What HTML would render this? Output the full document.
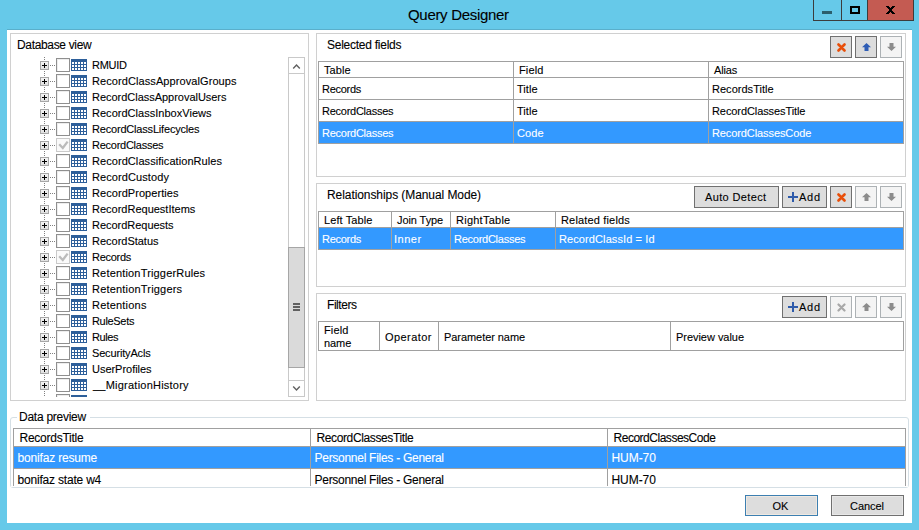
<!DOCTYPE html>
<html><head><meta charset="utf-8"><style>
html,body{margin:0;padding:0;width:919px;height:530px;overflow:hidden;background:#66C9E9;}
body div, body svg{position:absolute;}
.t{white-space:nowrap;font-family:"Liberation Sans",sans-serif;-webkit-text-stroke:0.1px currentColor;}
</style></head><body>
<div style="left:7px;top:29px;width:905px;height:1px;background:#5AAFCB"></div><div style="left:7px;top:30px;width:905px;height:493px;background:#fff"></div><div class="t" style="left:408.00px;top:6px;font-size:15px;line-height:17px;color:#000;letter-spacing:-0.311px;">Query Designer</div><div style="left:813px;top:-1px;width:29px;height:22px;border:1px solid #3C3C3C;box-sizing:border-box;background:#66C9E9"></div><div style="left:842px;top:-1px;width:26px;height:22px;border:1px solid #3C3C3C;border-left:none;box-sizing:border-box;background:#66C9E9"></div><div style="left:867px;top:-1px;width:47px;height:22px;border:1px solid #3C3C3C;box-sizing:border-box;background:#C45B52"></div><div style="left:822px;top:11px;width:10px;height:3px;background:#2B5E6C"></div><div style="left:850px;top:6px;width:10px;height:8px;border:2px solid #000;box-sizing:border-box"></div><svg style="left:886px;top:6px" width="9" height="8" viewBox="0 0 9 8" shape-rendering="crispEdges" fill="#000"><rect x="0" y="0" width="1" height="1"/><rect x="1" y="0" width="1" height="1"/><rect x="2" y="0" width="1" height="1"/><rect x="6" y="0" width="1" height="1"/><rect x="7" y="0" width="1" height="1"/><rect x="8" y="0" width="1" height="1"/><rect x="1" y="1" width="1" height="1"/><rect x="2" y="1" width="1" height="1"/><rect x="3" y="1" width="1" height="1"/><rect x="5" y="1" width="1" height="1"/><rect x="6" y="1" width="1" height="1"/><rect x="7" y="1" width="1" height="1"/><rect x="2" y="2" width="1" height="1"/><rect x="3" y="2" width="1" height="1"/><rect x="4" y="2" width="1" height="1"/><rect x="5" y="2" width="1" height="1"/><rect x="6" y="2" width="1" height="1"/><rect x="3" y="3" width="1" height="1"/><rect x="4" y="3" width="1" height="1"/><rect x="5" y="3" width="1" height="1"/><rect x="3" y="4" width="1" height="1"/><rect x="4" y="4" width="1" height="1"/><rect x="5" y="4" width="1" height="1"/><rect x="2" y="5" width="1" height="1"/><rect x="3" y="5" width="1" height="1"/><rect x="4" y="5" width="1" height="1"/><rect x="5" y="5" width="1" height="1"/><rect x="6" y="5" width="1" height="1"/><rect x="1" y="6" width="1" height="1"/><rect x="2" y="6" width="1" height="1"/><rect x="3" y="6" width="1" height="1"/><rect x="5" y="6" width="1" height="1"/><rect x="6" y="6" width="1" height="1"/><rect x="7" y="6" width="1" height="1"/><rect x="0" y="7" width="1" height="1"/><rect x="1" y="7" width="1" height="1"/><rect x="2" y="7" width="1" height="1"/><rect x="6" y="7" width="1" height="1"/><rect x="7" y="7" width="1" height="1"/><rect x="8" y="7" width="1" height="1"/></svg><div style="left:10px;top:33px;width:299px;height:368px;border:1px solid #D0D0D0;box-sizing:border-box"></div><div class="t" style="left:17.00px;top:38px;font-size:12px;line-height:14px;color:#000;letter-spacing:-0.337px;">Database view</div><div class="t" style="left:92.00px;top:59px;font-size:11px;line-height:13px;color:#000;letter-spacing:-0.277px;">RMUID</div><div class="t" style="left:92.00px;top:75px;font-size:11px;line-height:13px;color:#000;letter-spacing:0.085px;">RecordClassApprovalGroups</div><div class="t" style="left:92.00px;top:91px;font-size:11px;line-height:13px;color:#000;letter-spacing:-0.026px;">RecordClassApprovalUsers</div><div class="t" style="left:92.00px;top:107px;font-size:11px;line-height:13px;color:#000;letter-spacing:0.024px;">RecordClassInboxViews</div><div class="t" style="left:92.00px;top:123px;font-size:11px;line-height:13px;color:#000;letter-spacing:-0.188px;">RecordClassLifecycles</div><div class="t" style="left:92.00px;top:139px;font-size:11px;line-height:13px;color:#000;letter-spacing:-0.257px;">RecordClasses</div><div class="t" style="left:92.00px;top:155px;font-size:11px;line-height:13px;color:#000;letter-spacing:0.067px;">RecordClassificationRules</div><div class="t" style="left:92.00px;top:171px;font-size:11px;line-height:13px;color:#000;letter-spacing:0.091px;">RecordCustody</div><div class="t" style="left:92.00px;top:187px;font-size:11px;line-height:13px;color:#000;letter-spacing:0.060px;">RecordProperties</div><div class="t" style="left:92.00px;top:203px;font-size:11px;line-height:13px;color:#000;letter-spacing:-0.001px;">RecordRequestItems</div><div class="t" style="left:92.00px;top:219px;font-size:11px;line-height:13px;color:#000;letter-spacing:-0.025px;">RecordRequests</div><div class="t" style="left:92.00px;top:235px;font-size:11px;line-height:13px;color:#000;letter-spacing:-0.013px;">RecordStatus</div><div class="t" style="left:92.00px;top:251px;font-size:11px;line-height:13px;color:#000;letter-spacing:-0.277px;">Records</div><div class="t" style="left:92.00px;top:267px;font-size:11px;line-height:13px;color:#000;letter-spacing:0.173px;">RetentionTriggerRules</div><div class="t" style="left:92.00px;top:283px;font-size:11px;line-height:13px;color:#000;letter-spacing:0.192px;">RetentionTriggers</div><div class="t" style="left:92.00px;top:299px;font-size:11px;line-height:13px;color:#000;letter-spacing:0.201px;">Retentions</div><div class="t" style="left:92.00px;top:315px;font-size:11px;line-height:13px;color:#000;letter-spacing:-0.319px;">RuleSets</div><div class="t" style="left:92.00px;top:331px;font-size:11px;line-height:13px;color:#000;letter-spacing:-0.406px;">Rules</div><div class="t" style="left:92.00px;top:347px;font-size:11px;line-height:13px;color:#000;letter-spacing:-0.165px;">SecurityAcls</div><div class="t" style="left:92.00px;top:363px;font-size:11px;line-height:13px;color:#000;letter-spacing:-0.028px;">UserProfiles</div><div class="t" style="left:93.00px;top:379px;font-size:11px;line-height:13px;color:#000;letter-spacing:0.229px;">__MigrationHistory</div><div style="left:11px;top:34px;width:277px;height:363px;overflow:hidden"><div style="left:33px;top:23px;width:1px;height:1px;background:#808080"></div><div style="left:33px;top:25px;width:1px;height:1px;background:#808080"></div><div style="left:33px;top:27px;width:1px;height:1px;background:#808080"></div><div style="left:33px;top:29px;width:1px;height:1px;background:#808080"></div><div style="left:33px;top:31px;width:1px;height:1px;background:#808080"></div><div style="left:33px;top:33px;width:1px;height:1px;background:#808080"></div><div style="left:33px;top:35px;width:1px;height:1px;background:#808080"></div><div style="left:33px;top:37px;width:1px;height:1px;background:#808080"></div><div style="left:33px;top:39px;width:1px;height:1px;background:#808080"></div><div style="left:33px;top:41px;width:1px;height:1px;background:#808080"></div><div style="left:33px;top:43px;width:1px;height:1px;background:#808080"></div><div style="left:33px;top:45px;width:1px;height:1px;background:#808080"></div><div style="left:33px;top:47px;width:1px;height:1px;background:#808080"></div><div style="left:33px;top:49px;width:1px;height:1px;background:#808080"></div><div style="left:33px;top:51px;width:1px;height:1px;background:#808080"></div><div style="left:33px;top:53px;width:1px;height:1px;background:#808080"></div><div style="left:33px;top:55px;width:1px;height:1px;background:#808080"></div><div style="left:33px;top:57px;width:1px;height:1px;background:#808080"></div><div style="left:33px;top:59px;width:1px;height:1px;background:#808080"></div><div style="left:33px;top:61px;width:1px;height:1px;background:#808080"></div><div style="left:33px;top:63px;width:1px;height:1px;background:#808080"></div><div style="left:33px;top:65px;width:1px;height:1px;background:#808080"></div><div style="left:33px;top:67px;width:1px;height:1px;background:#808080"></div><div style="left:33px;top:69px;width:1px;height:1px;background:#808080"></div><div style="left:33px;top:71px;width:1px;height:1px;background:#808080"></div><div style="left:33px;top:73px;width:1px;height:1px;background:#808080"></div><div style="left:33px;top:75px;width:1px;height:1px;background:#808080"></div><div style="left:33px;top:77px;width:1px;height:1px;background:#808080"></div><div style="left:33px;top:79px;width:1px;height:1px;background:#808080"></div><div style="left:33px;top:81px;width:1px;height:1px;background:#808080"></div><div style="left:33px;top:83px;width:1px;height:1px;background:#808080"></div><div style="left:33px;top:85px;width:1px;height:1px;background:#808080"></div><div style="left:33px;top:87px;width:1px;height:1px;background:#808080"></div><div style="left:33px;top:89px;width:1px;height:1px;background:#808080"></div><div style="left:33px;top:91px;width:1px;height:1px;background:#808080"></div><div style="left:33px;top:93px;width:1px;height:1px;background:#808080"></div><div style="left:33px;top:95px;width:1px;height:1px;background:#808080"></div><div style="left:33px;top:97px;width:1px;height:1px;background:#808080"></div><div style="left:33px;top:99px;width:1px;height:1px;background:#808080"></div><div style="left:33px;top:101px;width:1px;height:1px;background:#808080"></div><div style="left:33px;top:103px;width:1px;height:1px;background:#808080"></div><div style="left:33px;top:105px;width:1px;height:1px;background:#808080"></div><div style="left:33px;top:107px;width:1px;height:1px;background:#808080"></div><div style="left:33px;top:109px;width:1px;height:1px;background:#808080"></div><div style="left:33px;top:111px;width:1px;height:1px;background:#808080"></div><div style="left:33px;top:113px;width:1px;height:1px;background:#808080"></div><div style="left:33px;top:115px;width:1px;height:1px;background:#808080"></div><div style="left:33px;top:117px;width:1px;height:1px;background:#808080"></div><div style="left:33px;top:119px;width:1px;height:1px;background:#808080"></div><div style="left:33px;top:121px;width:1px;height:1px;background:#808080"></div><div style="left:33px;top:123px;width:1px;height:1px;background:#808080"></div><div style="left:33px;top:125px;width:1px;height:1px;background:#808080"></div><div style="left:33px;top:127px;width:1px;height:1px;background:#808080"></div><div style="left:33px;top:129px;width:1px;height:1px;background:#808080"></div><div style="left:33px;top:131px;width:1px;height:1px;background:#808080"></div><div style="left:33px;top:133px;width:1px;height:1px;background:#808080"></div><div style="left:33px;top:135px;width:1px;height:1px;background:#808080"></div><div style="left:33px;top:137px;width:1px;height:1px;background:#808080"></div><div style="left:33px;top:139px;width:1px;height:1px;background:#808080"></div><div style="left:33px;top:141px;width:1px;height:1px;background:#808080"></div><div style="left:33px;top:143px;width:1px;height:1px;background:#808080"></div><div style="left:33px;top:145px;width:1px;height:1px;background:#808080"></div><div style="left:33px;top:147px;width:1px;height:1px;background:#808080"></div><div style="left:33px;top:149px;width:1px;height:1px;background:#808080"></div><div style="left:33px;top:151px;width:1px;height:1px;background:#808080"></div><div style="left:33px;top:153px;width:1px;height:1px;background:#808080"></div><div style="left:33px;top:155px;width:1px;height:1px;background:#808080"></div><div style="left:33px;top:157px;width:1px;height:1px;background:#808080"></div><div style="left:33px;top:159px;width:1px;height:1px;background:#808080"></div><div style="left:33px;top:161px;width:1px;height:1px;background:#808080"></div><div style="left:33px;top:163px;width:1px;height:1px;background:#808080"></div><div style="left:33px;top:165px;width:1px;height:1px;background:#808080"></div><div style="left:33px;top:167px;width:1px;height:1px;background:#808080"></div><div style="left:33px;top:169px;width:1px;height:1px;background:#808080"></div><div style="left:33px;top:171px;width:1px;height:1px;background:#808080"></div><div style="left:33px;top:173px;width:1px;height:1px;background:#808080"></div><div style="left:33px;top:175px;width:1px;height:1px;background:#808080"></div><div style="left:33px;top:177px;width:1px;height:1px;background:#808080"></div><div style="left:33px;top:179px;width:1px;height:1px;background:#808080"></div><div style="left:33px;top:181px;width:1px;height:1px;background:#808080"></div><div style="left:33px;top:183px;width:1px;height:1px;background:#808080"></div><div style="left:33px;top:185px;width:1px;height:1px;background:#808080"></div><div style="left:33px;top:187px;width:1px;height:1px;background:#808080"></div><div style="left:33px;top:189px;width:1px;height:1px;background:#808080"></div><div style="left:33px;top:191px;width:1px;height:1px;background:#808080"></div><div style="left:33px;top:193px;width:1px;height:1px;background:#808080"></div><div style="left:33px;top:195px;width:1px;height:1px;background:#808080"></div><div style="left:33px;top:197px;width:1px;height:1px;background:#808080"></div><div style="left:33px;top:199px;width:1px;height:1px;background:#808080"></div><div style="left:33px;top:201px;width:1px;height:1px;background:#808080"></div><div style="left:33px;top:203px;width:1px;height:1px;background:#808080"></div><div style="left:33px;top:205px;width:1px;height:1px;background:#808080"></div><div style="left:33px;top:207px;width:1px;height:1px;background:#808080"></div><div style="left:33px;top:209px;width:1px;height:1px;background:#808080"></div><div style="left:33px;top:211px;width:1px;height:1px;background:#808080"></div><div style="left:33px;top:213px;width:1px;height:1px;background:#808080"></div><div style="left:33px;top:215px;width:1px;height:1px;background:#808080"></div><div style="left:33px;top:217px;width:1px;height:1px;background:#808080"></div><div style="left:33px;top:219px;width:1px;height:1px;background:#808080"></div><div style="left:33px;top:221px;width:1px;height:1px;background:#808080"></div><div style="left:33px;top:223px;width:1px;height:1px;background:#808080"></div><div style="left:33px;top:225px;width:1px;height:1px;background:#808080"></div><div style="left:33px;top:227px;width:1px;height:1px;background:#808080"></div><div style="left:33px;top:229px;width:1px;height:1px;background:#808080"></div><div style="left:33px;top:231px;width:1px;height:1px;background:#808080"></div><div style="left:33px;top:233px;width:1px;height:1px;background:#808080"></div><div style="left:33px;top:235px;width:1px;height:1px;background:#808080"></div><div style="left:33px;top:237px;width:1px;height:1px;background:#808080"></div><div style="left:33px;top:239px;width:1px;height:1px;background:#808080"></div><div style="left:33px;top:241px;width:1px;height:1px;background:#808080"></div><div style="left:33px;top:243px;width:1px;height:1px;background:#808080"></div><div style="left:33px;top:245px;width:1px;height:1px;background:#808080"></div><div style="left:33px;top:247px;width:1px;height:1px;background:#808080"></div><div style="left:33px;top:249px;width:1px;height:1px;background:#808080"></div><div style="left:33px;top:251px;width:1px;height:1px;background:#808080"></div><div style="left:33px;top:253px;width:1px;height:1px;background:#808080"></div><div style="left:33px;top:255px;width:1px;height:1px;background:#808080"></div><div style="left:33px;top:257px;width:1px;height:1px;background:#808080"></div><div style="left:33px;top:259px;width:1px;height:1px;background:#808080"></div><div style="left:33px;top:261px;width:1px;height:1px;background:#808080"></div><div style="left:33px;top:263px;width:1px;height:1px;background:#808080"></div><div style="left:33px;top:265px;width:1px;height:1px;background:#808080"></div><div style="left:33px;top:267px;width:1px;height:1px;background:#808080"></div><div style="left:33px;top:269px;width:1px;height:1px;background:#808080"></div><div style="left:33px;top:271px;width:1px;height:1px;background:#808080"></div><div style="left:33px;top:273px;width:1px;height:1px;background:#808080"></div><div style="left:33px;top:275px;width:1px;height:1px;background:#808080"></div><div style="left:33px;top:277px;width:1px;height:1px;background:#808080"></div><div style="left:33px;top:279px;width:1px;height:1px;background:#808080"></div><div style="left:33px;top:281px;width:1px;height:1px;background:#808080"></div><div style="left:33px;top:283px;width:1px;height:1px;background:#808080"></div><div style="left:33px;top:285px;width:1px;height:1px;background:#808080"></div><div style="left:33px;top:287px;width:1px;height:1px;background:#808080"></div><div style="left:33px;top:289px;width:1px;height:1px;background:#808080"></div><div style="left:33px;top:291px;width:1px;height:1px;background:#808080"></div><div style="left:33px;top:293px;width:1px;height:1px;background:#808080"></div><div style="left:33px;top:295px;width:1px;height:1px;background:#808080"></div><div style="left:33px;top:297px;width:1px;height:1px;background:#808080"></div><div style="left:33px;top:299px;width:1px;height:1px;background:#808080"></div><div style="left:33px;top:301px;width:1px;height:1px;background:#808080"></div><div style="left:33px;top:303px;width:1px;height:1px;background:#808080"></div><div style="left:33px;top:305px;width:1px;height:1px;background:#808080"></div><div style="left:33px;top:307px;width:1px;height:1px;background:#808080"></div><div style="left:33px;top:309px;width:1px;height:1px;background:#808080"></div><div style="left:33px;top:311px;width:1px;height:1px;background:#808080"></div><div style="left:33px;top:313px;width:1px;height:1px;background:#808080"></div><div style="left:33px;top:315px;width:1px;height:1px;background:#808080"></div><div style="left:33px;top:317px;width:1px;height:1px;background:#808080"></div><div style="left:33px;top:319px;width:1px;height:1px;background:#808080"></div><div style="left:33px;top:321px;width:1px;height:1px;background:#808080"></div><div style="left:33px;top:323px;width:1px;height:1px;background:#808080"></div><div style="left:33px;top:325px;width:1px;height:1px;background:#808080"></div><div style="left:33px;top:327px;width:1px;height:1px;background:#808080"></div><div style="left:33px;top:329px;width:1px;height:1px;background:#808080"></div><div style="left:33px;top:331px;width:1px;height:1px;background:#808080"></div><div style="left:33px;top:333px;width:1px;height:1px;background:#808080"></div><div style="left:33px;top:335px;width:1px;height:1px;background:#808080"></div><div style="left:33px;top:337px;width:1px;height:1px;background:#808080"></div><div style="left:33px;top:339px;width:1px;height:1px;background:#808080"></div><div style="left:33px;top:341px;width:1px;height:1px;background:#808080"></div><div style="left:33px;top:343px;width:1px;height:1px;background:#808080"></div><div style="left:33px;top:345px;width:1px;height:1px;background:#808080"></div><div style="left:33px;top:347px;width:1px;height:1px;background:#808080"></div><div style="left:33px;top:349px;width:1px;height:1px;background:#808080"></div><div style="left:33px;top:351px;width:1px;height:1px;background:#808080"></div><div style="left:33px;top:353px;width:1px;height:1px;background:#808080"></div><div style="left:33px;top:355px;width:1px;height:1px;background:#808080"></div><div style="left:33px;top:357px;width:1px;height:1px;background:#808080"></div><div style="left:33px;top:359px;width:1px;height:1px;background:#808080"></div><div style="left:33px;top:361px;width:1px;height:1px;background:#808080"></div><div style="left:33px;top:363px;width:1px;height:1px;background:#808080"></div><div style="left:39px;top:31px;width:1px;height:1px;background:#808080"></div><div style="left:41px;top:31px;width:1px;height:1px;background:#808080"></div><div style="left:43px;top:31px;width:1px;height:1px;background:#808080"></div><div style="left:29px;top:27px;width:9px;height:9px;border:1px solid #A7A7A7;box-sizing:border-box;background:linear-gradient(#F4F4F4,#E0E0E0)"></div><div style="left:31px;top:31px;width:5px;height:1px;background:#000"></div><div style="left:33px;top:29px;width:1px;height:5px;background:#000"></div><div style="left:45px;top:24px;width:14px;height:14px;border:1px solid #8F8F8F;box-sizing:border-box;background:#fff;box-shadow:inset 1px 1px 0 #EDEDED"></div><svg style="left:60px;top:25px" width="16" height="12" viewBox="0 0 16 12" shape-rendering="crispEdges"><rect width="16" height="12" fill="#2D5F9A"/><g fill="#fff"><rect x="1" y="3" width="2" height="2"/><rect x="1" y="6" width="2" height="2"/><rect x="1" y="9" width="2" height="2"/><rect x="4" y="3" width="2" height="2"/><rect x="4" y="6" width="2" height="2"/><rect x="4" y="9" width="2" height="2"/><rect x="7" y="3" width="2" height="2"/><rect x="7" y="6" width="2" height="2"/><rect x="7" y="9" width="2" height="2"/><rect x="10" y="3" width="2" height="2"/><rect x="10" y="6" width="2" height="2"/><rect x="10" y="9" width="2" height="2"/><rect x="13" y="3" width="2" height="2"/><rect x="13" y="6" width="2" height="2"/><rect x="13" y="9" width="2" height="2"/></g></svg><div style="left:39px;top:47px;width:1px;height:1px;background:#808080"></div><div style="left:41px;top:47px;width:1px;height:1px;background:#808080"></div><div style="left:43px;top:47px;width:1px;height:1px;background:#808080"></div><div style="left:29px;top:43px;width:9px;height:9px;border:1px solid #A7A7A7;box-sizing:border-box;background:linear-gradient(#F4F4F4,#E0E0E0)"></div><div style="left:31px;top:47px;width:5px;height:1px;background:#000"></div><div style="left:33px;top:45px;width:1px;height:5px;background:#000"></div><div style="left:45px;top:40px;width:14px;height:14px;border:1px solid #8F8F8F;box-sizing:border-box;background:#fff;box-shadow:inset 1px 1px 0 #EDEDED"></div><svg style="left:60px;top:41px" width="16" height="12" viewBox="0 0 16 12" shape-rendering="crispEdges"><rect width="16" height="12" fill="#2D5F9A"/><g fill="#fff"><rect x="1" y="3" width="2" height="2"/><rect x="1" y="6" width="2" height="2"/><rect x="1" y="9" width="2" height="2"/><rect x="4" y="3" width="2" height="2"/><rect x="4" y="6" width="2" height="2"/><rect x="4" y="9" width="2" height="2"/><rect x="7" y="3" width="2" height="2"/><rect x="7" y="6" width="2" height="2"/><rect x="7" y="9" width="2" height="2"/><rect x="10" y="3" width="2" height="2"/><rect x="10" y="6" width="2" height="2"/><rect x="10" y="9" width="2" height="2"/><rect x="13" y="3" width="2" height="2"/><rect x="13" y="6" width="2" height="2"/><rect x="13" y="9" width="2" height="2"/></g></svg><div style="left:39px;top:63px;width:1px;height:1px;background:#808080"></div><div style="left:41px;top:63px;width:1px;height:1px;background:#808080"></div><div style="left:43px;top:63px;width:1px;height:1px;background:#808080"></div><div style="left:29px;top:59px;width:9px;height:9px;border:1px solid #A7A7A7;box-sizing:border-box;background:linear-gradient(#F4F4F4,#E0E0E0)"></div><div style="left:31px;top:63px;width:5px;height:1px;background:#000"></div><div style="left:33px;top:61px;width:1px;height:5px;background:#000"></div><div style="left:45px;top:56px;width:14px;height:14px;border:1px solid #8F8F8F;box-sizing:border-box;background:#fff;box-shadow:inset 1px 1px 0 #EDEDED"></div><svg style="left:60px;top:57px" width="16" height="12" viewBox="0 0 16 12" shape-rendering="crispEdges"><rect width="16" height="12" fill="#2D5F9A"/><g fill="#fff"><rect x="1" y="3" width="2" height="2"/><rect x="1" y="6" width="2" height="2"/><rect x="1" y="9" width="2" height="2"/><rect x="4" y="3" width="2" height="2"/><rect x="4" y="6" width="2" height="2"/><rect x="4" y="9" width="2" height="2"/><rect x="7" y="3" width="2" height="2"/><rect x="7" y="6" width="2" height="2"/><rect x="7" y="9" width="2" height="2"/><rect x="10" y="3" width="2" height="2"/><rect x="10" y="6" width="2" height="2"/><rect x="10" y="9" width="2" height="2"/><rect x="13" y="3" width="2" height="2"/><rect x="13" y="6" width="2" height="2"/><rect x="13" y="9" width="2" height="2"/></g></svg><div style="left:39px;top:79px;width:1px;height:1px;background:#808080"></div><div style="left:41px;top:79px;width:1px;height:1px;background:#808080"></div><div style="left:43px;top:79px;width:1px;height:1px;background:#808080"></div><div style="left:29px;top:75px;width:9px;height:9px;border:1px solid #A7A7A7;box-sizing:border-box;background:linear-gradient(#F4F4F4,#E0E0E0)"></div><div style="left:31px;top:79px;width:5px;height:1px;background:#000"></div><div style="left:33px;top:77px;width:1px;height:5px;background:#000"></div><div style="left:45px;top:72px;width:14px;height:14px;border:1px solid #8F8F8F;box-sizing:border-box;background:#fff;box-shadow:inset 1px 1px 0 #EDEDED"></div><svg style="left:60px;top:73px" width="16" height="12" viewBox="0 0 16 12" shape-rendering="crispEdges"><rect width="16" height="12" fill="#2D5F9A"/><g fill="#fff"><rect x="1" y="3" width="2" height="2"/><rect x="1" y="6" width="2" height="2"/><rect x="1" y="9" width="2" height="2"/><rect x="4" y="3" width="2" height="2"/><rect x="4" y="6" width="2" height="2"/><rect x="4" y="9" width="2" height="2"/><rect x="7" y="3" width="2" height="2"/><rect x="7" y="6" width="2" height="2"/><rect x="7" y="9" width="2" height="2"/><rect x="10" y="3" width="2" height="2"/><rect x="10" y="6" width="2" height="2"/><rect x="10" y="9" width="2" height="2"/><rect x="13" y="3" width="2" height="2"/><rect x="13" y="6" width="2" height="2"/><rect x="13" y="9" width="2" height="2"/></g></svg><div style="left:39px;top:95px;width:1px;height:1px;background:#808080"></div><div style="left:41px;top:95px;width:1px;height:1px;background:#808080"></div><div style="left:43px;top:95px;width:1px;height:1px;background:#808080"></div><div style="left:29px;top:91px;width:9px;height:9px;border:1px solid #A7A7A7;box-sizing:border-box;background:linear-gradient(#F4F4F4,#E0E0E0)"></div><div style="left:31px;top:95px;width:5px;height:1px;background:#000"></div><div style="left:33px;top:93px;width:1px;height:5px;background:#000"></div><div style="left:45px;top:88px;width:14px;height:14px;border:1px solid #8F8F8F;box-sizing:border-box;background:#fff;box-shadow:inset 1px 1px 0 #EDEDED"></div><svg style="left:60px;top:89px" width="16" height="12" viewBox="0 0 16 12" shape-rendering="crispEdges"><rect width="16" height="12" fill="#2D5F9A"/><g fill="#fff"><rect x="1" y="3" width="2" height="2"/><rect x="1" y="6" width="2" height="2"/><rect x="1" y="9" width="2" height="2"/><rect x="4" y="3" width="2" height="2"/><rect x="4" y="6" width="2" height="2"/><rect x="4" y="9" width="2" height="2"/><rect x="7" y="3" width="2" height="2"/><rect x="7" y="6" width="2" height="2"/><rect x="7" y="9" width="2" height="2"/><rect x="10" y="3" width="2" height="2"/><rect x="10" y="6" width="2" height="2"/><rect x="10" y="9" width="2" height="2"/><rect x="13" y="3" width="2" height="2"/><rect x="13" y="6" width="2" height="2"/><rect x="13" y="9" width="2" height="2"/></g></svg><div style="left:39px;top:111px;width:1px;height:1px;background:#808080"></div><div style="left:41px;top:111px;width:1px;height:1px;background:#808080"></div><div style="left:43px;top:111px;width:1px;height:1px;background:#808080"></div><div style="left:29px;top:107px;width:9px;height:9px;border:1px solid #A7A7A7;box-sizing:border-box;background:linear-gradient(#F4F4F4,#E0E0E0)"></div><div style="left:31px;top:111px;width:5px;height:1px;background:#000"></div><div style="left:33px;top:109px;width:1px;height:5px;background:#000"></div><div style="left:45px;top:104px;width:14px;height:14px;border:1px solid #CACACA;box-sizing:border-box;background:#FAFAFA"></div><svg style="left:47px;top:106px" width="11" height="10" viewBox="0 0 11 10"><path d="M1.2 4.2 L4.8 8 L9.6 1.6" fill="none" stroke="#BBBBBB" stroke-width="2.3"/></svg><svg style="left:60px;top:105px" width="16" height="12" viewBox="0 0 16 12" shape-rendering="crispEdges"><rect width="16" height="12" fill="#2D5F9A"/><g fill="#fff"><rect x="1" y="3" width="2" height="2"/><rect x="1" y="6" width="2" height="2"/><rect x="1" y="9" width="2" height="2"/><rect x="4" y="3" width="2" height="2"/><rect x="4" y="6" width="2" height="2"/><rect x="4" y="9" width="2" height="2"/><rect x="7" y="3" width="2" height="2"/><rect x="7" y="6" width="2" height="2"/><rect x="7" y="9" width="2" height="2"/><rect x="10" y="3" width="2" height="2"/><rect x="10" y="6" width="2" height="2"/><rect x="10" y="9" width="2" height="2"/><rect x="13" y="3" width="2" height="2"/><rect x="13" y="6" width="2" height="2"/><rect x="13" y="9" width="2" height="2"/></g></svg><div style="left:39px;top:127px;width:1px;height:1px;background:#808080"></div><div style="left:41px;top:127px;width:1px;height:1px;background:#808080"></div><div style="left:43px;top:127px;width:1px;height:1px;background:#808080"></div><div style="left:29px;top:123px;width:9px;height:9px;border:1px solid #A7A7A7;box-sizing:border-box;background:linear-gradient(#F4F4F4,#E0E0E0)"></div><div style="left:31px;top:127px;width:5px;height:1px;background:#000"></div><div style="left:33px;top:125px;width:1px;height:5px;background:#000"></div><div style="left:45px;top:120px;width:14px;height:14px;border:1px solid #8F8F8F;box-sizing:border-box;background:#fff;box-shadow:inset 1px 1px 0 #EDEDED"></div><svg style="left:60px;top:121px" width="16" height="12" viewBox="0 0 16 12" shape-rendering="crispEdges"><rect width="16" height="12" fill="#2D5F9A"/><g fill="#fff"><rect x="1" y="3" width="2" height="2"/><rect x="1" y="6" width="2" height="2"/><rect x="1" y="9" width="2" height="2"/><rect x="4" y="3" width="2" height="2"/><rect x="4" y="6" width="2" height="2"/><rect x="4" y="9" width="2" height="2"/><rect x="7" y="3" width="2" height="2"/><rect x="7" y="6" width="2" height="2"/><rect x="7" y="9" width="2" height="2"/><rect x="10" y="3" width="2" height="2"/><rect x="10" y="6" width="2" height="2"/><rect x="10" y="9" width="2" height="2"/><rect x="13" y="3" width="2" height="2"/><rect x="13" y="6" width="2" height="2"/><rect x="13" y="9" width="2" height="2"/></g></svg><div style="left:39px;top:143px;width:1px;height:1px;background:#808080"></div><div style="left:41px;top:143px;width:1px;height:1px;background:#808080"></div><div style="left:43px;top:143px;width:1px;height:1px;background:#808080"></div><div style="left:29px;top:139px;width:9px;height:9px;border:1px solid #A7A7A7;box-sizing:border-box;background:linear-gradient(#F4F4F4,#E0E0E0)"></div><div style="left:31px;top:143px;width:5px;height:1px;background:#000"></div><div style="left:33px;top:141px;width:1px;height:5px;background:#000"></div><div style="left:45px;top:136px;width:14px;height:14px;border:1px solid #8F8F8F;box-sizing:border-box;background:#fff;box-shadow:inset 1px 1px 0 #EDEDED"></div><svg style="left:60px;top:137px" width="16" height="12" viewBox="0 0 16 12" shape-rendering="crispEdges"><rect width="16" height="12" fill="#2D5F9A"/><g fill="#fff"><rect x="1" y="3" width="2" height="2"/><rect x="1" y="6" width="2" height="2"/><rect x="1" y="9" width="2" height="2"/><rect x="4" y="3" width="2" height="2"/><rect x="4" y="6" width="2" height="2"/><rect x="4" y="9" width="2" height="2"/><rect x="7" y="3" width="2" height="2"/><rect x="7" y="6" width="2" height="2"/><rect x="7" y="9" width="2" height="2"/><rect x="10" y="3" width="2" height="2"/><rect x="10" y="6" width="2" height="2"/><rect x="10" y="9" width="2" height="2"/><rect x="13" y="3" width="2" height="2"/><rect x="13" y="6" width="2" height="2"/><rect x="13" y="9" width="2" height="2"/></g></svg><div style="left:39px;top:159px;width:1px;height:1px;background:#808080"></div><div style="left:41px;top:159px;width:1px;height:1px;background:#808080"></div><div style="left:43px;top:159px;width:1px;height:1px;background:#808080"></div><div style="left:29px;top:155px;width:9px;height:9px;border:1px solid #A7A7A7;box-sizing:border-box;background:linear-gradient(#F4F4F4,#E0E0E0)"></div><div style="left:31px;top:159px;width:5px;height:1px;background:#000"></div><div style="left:33px;top:157px;width:1px;height:5px;background:#000"></div><div style="left:45px;top:152px;width:14px;height:14px;border:1px solid #8F8F8F;box-sizing:border-box;background:#fff;box-shadow:inset 1px 1px 0 #EDEDED"></div><svg style="left:60px;top:153px" width="16" height="12" viewBox="0 0 16 12" shape-rendering="crispEdges"><rect width="16" height="12" fill="#2D5F9A"/><g fill="#fff"><rect x="1" y="3" width="2" height="2"/><rect x="1" y="6" width="2" height="2"/><rect x="1" y="9" width="2" height="2"/><rect x="4" y="3" width="2" height="2"/><rect x="4" y="6" width="2" height="2"/><rect x="4" y="9" width="2" height="2"/><rect x="7" y="3" width="2" height="2"/><rect x="7" y="6" width="2" height="2"/><rect x="7" y="9" width="2" height="2"/><rect x="10" y="3" width="2" height="2"/><rect x="10" y="6" width="2" height="2"/><rect x="10" y="9" width="2" height="2"/><rect x="13" y="3" width="2" height="2"/><rect x="13" y="6" width="2" height="2"/><rect x="13" y="9" width="2" height="2"/></g></svg><div style="left:39px;top:175px;width:1px;height:1px;background:#808080"></div><div style="left:41px;top:175px;width:1px;height:1px;background:#808080"></div><div style="left:43px;top:175px;width:1px;height:1px;background:#808080"></div><div style="left:29px;top:171px;width:9px;height:9px;border:1px solid #A7A7A7;box-sizing:border-box;background:linear-gradient(#F4F4F4,#E0E0E0)"></div><div style="left:31px;top:175px;width:5px;height:1px;background:#000"></div><div style="left:33px;top:173px;width:1px;height:5px;background:#000"></div><div style="left:45px;top:168px;width:14px;height:14px;border:1px solid #8F8F8F;box-sizing:border-box;background:#fff;box-shadow:inset 1px 1px 0 #EDEDED"></div><svg style="left:60px;top:169px" width="16" height="12" viewBox="0 0 16 12" shape-rendering="crispEdges"><rect width="16" height="12" fill="#2D5F9A"/><g fill="#fff"><rect x="1" y="3" width="2" height="2"/><rect x="1" y="6" width="2" height="2"/><rect x="1" y="9" width="2" height="2"/><rect x="4" y="3" width="2" height="2"/><rect x="4" y="6" width="2" height="2"/><rect x="4" y="9" width="2" height="2"/><rect x="7" y="3" width="2" height="2"/><rect x="7" y="6" width="2" height="2"/><rect x="7" y="9" width="2" height="2"/><rect x="10" y="3" width="2" height="2"/><rect x="10" y="6" width="2" height="2"/><rect x="10" y="9" width="2" height="2"/><rect x="13" y="3" width="2" height="2"/><rect x="13" y="6" width="2" height="2"/><rect x="13" y="9" width="2" height="2"/></g></svg><div style="left:39px;top:191px;width:1px;height:1px;background:#808080"></div><div style="left:41px;top:191px;width:1px;height:1px;background:#808080"></div><div style="left:43px;top:191px;width:1px;height:1px;background:#808080"></div><div style="left:29px;top:187px;width:9px;height:9px;border:1px solid #A7A7A7;box-sizing:border-box;background:linear-gradient(#F4F4F4,#E0E0E0)"></div><div style="left:31px;top:191px;width:5px;height:1px;background:#000"></div><div style="left:33px;top:189px;width:1px;height:5px;background:#000"></div><div style="left:45px;top:184px;width:14px;height:14px;border:1px solid #8F8F8F;box-sizing:border-box;background:#fff;box-shadow:inset 1px 1px 0 #EDEDED"></div><svg style="left:60px;top:185px" width="16" height="12" viewBox="0 0 16 12" shape-rendering="crispEdges"><rect width="16" height="12" fill="#2D5F9A"/><g fill="#fff"><rect x="1" y="3" width="2" height="2"/><rect x="1" y="6" width="2" height="2"/><rect x="1" y="9" width="2" height="2"/><rect x="4" y="3" width="2" height="2"/><rect x="4" y="6" width="2" height="2"/><rect x="4" y="9" width="2" height="2"/><rect x="7" y="3" width="2" height="2"/><rect x="7" y="6" width="2" height="2"/><rect x="7" y="9" width="2" height="2"/><rect x="10" y="3" width="2" height="2"/><rect x="10" y="6" width="2" height="2"/><rect x="10" y="9" width="2" height="2"/><rect x="13" y="3" width="2" height="2"/><rect x="13" y="6" width="2" height="2"/><rect x="13" y="9" width="2" height="2"/></g></svg><div style="left:39px;top:207px;width:1px;height:1px;background:#808080"></div><div style="left:41px;top:207px;width:1px;height:1px;background:#808080"></div><div style="left:43px;top:207px;width:1px;height:1px;background:#808080"></div><div style="left:29px;top:203px;width:9px;height:9px;border:1px solid #A7A7A7;box-sizing:border-box;background:linear-gradient(#F4F4F4,#E0E0E0)"></div><div style="left:31px;top:207px;width:5px;height:1px;background:#000"></div><div style="left:33px;top:205px;width:1px;height:5px;background:#000"></div><div style="left:45px;top:200px;width:14px;height:14px;border:1px solid #8F8F8F;box-sizing:border-box;background:#fff;box-shadow:inset 1px 1px 0 #EDEDED"></div><svg style="left:60px;top:201px" width="16" height="12" viewBox="0 0 16 12" shape-rendering="crispEdges"><rect width="16" height="12" fill="#2D5F9A"/><g fill="#fff"><rect x="1" y="3" width="2" height="2"/><rect x="1" y="6" width="2" height="2"/><rect x="1" y="9" width="2" height="2"/><rect x="4" y="3" width="2" height="2"/><rect x="4" y="6" width="2" height="2"/><rect x="4" y="9" width="2" height="2"/><rect x="7" y="3" width="2" height="2"/><rect x="7" y="6" width="2" height="2"/><rect x="7" y="9" width="2" height="2"/><rect x="10" y="3" width="2" height="2"/><rect x="10" y="6" width="2" height="2"/><rect x="10" y="9" width="2" height="2"/><rect x="13" y="3" width="2" height="2"/><rect x="13" y="6" width="2" height="2"/><rect x="13" y="9" width="2" height="2"/></g></svg><div style="left:39px;top:223px;width:1px;height:1px;background:#808080"></div><div style="left:41px;top:223px;width:1px;height:1px;background:#808080"></div><div style="left:43px;top:223px;width:1px;height:1px;background:#808080"></div><div style="left:29px;top:219px;width:9px;height:9px;border:1px solid #A7A7A7;box-sizing:border-box;background:linear-gradient(#F4F4F4,#E0E0E0)"></div><div style="left:31px;top:223px;width:5px;height:1px;background:#000"></div><div style="left:33px;top:221px;width:1px;height:5px;background:#000"></div><div style="left:45px;top:216px;width:14px;height:14px;border:1px solid #CACACA;box-sizing:border-box;background:#FAFAFA"></div><svg style="left:47px;top:218px" width="11" height="10" viewBox="0 0 11 10"><path d="M1.2 4.2 L4.8 8 L9.6 1.6" fill="none" stroke="#BBBBBB" stroke-width="2.3"/></svg><svg style="left:60px;top:217px" width="16" height="12" viewBox="0 0 16 12" shape-rendering="crispEdges"><rect width="16" height="12" fill="#2D5F9A"/><g fill="#fff"><rect x="1" y="3" width="2" height="2"/><rect x="1" y="6" width="2" height="2"/><rect x="1" y="9" width="2" height="2"/><rect x="4" y="3" width="2" height="2"/><rect x="4" y="6" width="2" height="2"/><rect x="4" y="9" width="2" height="2"/><rect x="7" y="3" width="2" height="2"/><rect x="7" y="6" width="2" height="2"/><rect x="7" y="9" width="2" height="2"/><rect x="10" y="3" width="2" height="2"/><rect x="10" y="6" width="2" height="2"/><rect x="10" y="9" width="2" height="2"/><rect x="13" y="3" width="2" height="2"/><rect x="13" y="6" width="2" height="2"/><rect x="13" y="9" width="2" height="2"/></g></svg><div style="left:39px;top:239px;width:1px;height:1px;background:#808080"></div><div style="left:41px;top:239px;width:1px;height:1px;background:#808080"></div><div style="left:43px;top:239px;width:1px;height:1px;background:#808080"></div><div style="left:29px;top:235px;width:9px;height:9px;border:1px solid #A7A7A7;box-sizing:border-box;background:linear-gradient(#F4F4F4,#E0E0E0)"></div><div style="left:31px;top:239px;width:5px;height:1px;background:#000"></div><div style="left:33px;top:237px;width:1px;height:5px;background:#000"></div><div style="left:45px;top:232px;width:14px;height:14px;border:1px solid #8F8F8F;box-sizing:border-box;background:#fff;box-shadow:inset 1px 1px 0 #EDEDED"></div><svg style="left:60px;top:233px" width="16" height="12" viewBox="0 0 16 12" shape-rendering="crispEdges"><rect width="16" height="12" fill="#2D5F9A"/><g fill="#fff"><rect x="1" y="3" width="2" height="2"/><rect x="1" y="6" width="2" height="2"/><rect x="1" y="9" width="2" height="2"/><rect x="4" y="3" width="2" height="2"/><rect x="4" y="6" width="2" height="2"/><rect x="4" y="9" width="2" height="2"/><rect x="7" y="3" width="2" height="2"/><rect x="7" y="6" width="2" height="2"/><rect x="7" y="9" width="2" height="2"/><rect x="10" y="3" width="2" height="2"/><rect x="10" y="6" width="2" height="2"/><rect x="10" y="9" width="2" height="2"/><rect x="13" y="3" width="2" height="2"/><rect x="13" y="6" width="2" height="2"/><rect x="13" y="9" width="2" height="2"/></g></svg><div style="left:39px;top:255px;width:1px;height:1px;background:#808080"></div><div style="left:41px;top:255px;width:1px;height:1px;background:#808080"></div><div style="left:43px;top:255px;width:1px;height:1px;background:#808080"></div><div style="left:29px;top:251px;width:9px;height:9px;border:1px solid #A7A7A7;box-sizing:border-box;background:linear-gradient(#F4F4F4,#E0E0E0)"></div><div style="left:31px;top:255px;width:5px;height:1px;background:#000"></div><div style="left:33px;top:253px;width:1px;height:5px;background:#000"></div><div style="left:45px;top:248px;width:14px;height:14px;border:1px solid #8F8F8F;box-sizing:border-box;background:#fff;box-shadow:inset 1px 1px 0 #EDEDED"></div><svg style="left:60px;top:249px" width="16" height="12" viewBox="0 0 16 12" shape-rendering="crispEdges"><rect width="16" height="12" fill="#2D5F9A"/><g fill="#fff"><rect x="1" y="3" width="2" height="2"/><rect x="1" y="6" width="2" height="2"/><rect x="1" y="9" width="2" height="2"/><rect x="4" y="3" width="2" height="2"/><rect x="4" y="6" width="2" height="2"/><rect x="4" y="9" width="2" height="2"/><rect x="7" y="3" width="2" height="2"/><rect x="7" y="6" width="2" height="2"/><rect x="7" y="9" width="2" height="2"/><rect x="10" y="3" width="2" height="2"/><rect x="10" y="6" width="2" height="2"/><rect x="10" y="9" width="2" height="2"/><rect x="13" y="3" width="2" height="2"/><rect x="13" y="6" width="2" height="2"/><rect x="13" y="9" width="2" height="2"/></g></svg><div style="left:39px;top:271px;width:1px;height:1px;background:#808080"></div><div style="left:41px;top:271px;width:1px;height:1px;background:#808080"></div><div style="left:43px;top:271px;width:1px;height:1px;background:#808080"></div><div style="left:29px;top:267px;width:9px;height:9px;border:1px solid #A7A7A7;box-sizing:border-box;background:linear-gradient(#F4F4F4,#E0E0E0)"></div><div style="left:31px;top:271px;width:5px;height:1px;background:#000"></div><div style="left:33px;top:269px;width:1px;height:5px;background:#000"></div><div style="left:45px;top:264px;width:14px;height:14px;border:1px solid #8F8F8F;box-sizing:border-box;background:#fff;box-shadow:inset 1px 1px 0 #EDEDED"></div><svg style="left:60px;top:265px" width="16" height="12" viewBox="0 0 16 12" shape-rendering="crispEdges"><rect width="16" height="12" fill="#2D5F9A"/><g fill="#fff"><rect x="1" y="3" width="2" height="2"/><rect x="1" y="6" width="2" height="2"/><rect x="1" y="9" width="2" height="2"/><rect x="4" y="3" width="2" height="2"/><rect x="4" y="6" width="2" height="2"/><rect x="4" y="9" width="2" height="2"/><rect x="7" y="3" width="2" height="2"/><rect x="7" y="6" width="2" height="2"/><rect x="7" y="9" width="2" height="2"/><rect x="10" y="3" width="2" height="2"/><rect x="10" y="6" width="2" height="2"/><rect x="10" y="9" width="2" height="2"/><rect x="13" y="3" width="2" height="2"/><rect x="13" y="6" width="2" height="2"/><rect x="13" y="9" width="2" height="2"/></g></svg><div style="left:39px;top:287px;width:1px;height:1px;background:#808080"></div><div style="left:41px;top:287px;width:1px;height:1px;background:#808080"></div><div style="left:43px;top:287px;width:1px;height:1px;background:#808080"></div><div style="left:29px;top:283px;width:9px;height:9px;border:1px solid #A7A7A7;box-sizing:border-box;background:linear-gradient(#F4F4F4,#E0E0E0)"></div><div style="left:31px;top:287px;width:5px;height:1px;background:#000"></div><div style="left:33px;top:285px;width:1px;height:5px;background:#000"></div><div style="left:45px;top:280px;width:14px;height:14px;border:1px solid #8F8F8F;box-sizing:border-box;background:#fff;box-shadow:inset 1px 1px 0 #EDEDED"></div><svg style="left:60px;top:281px" width="16" height="12" viewBox="0 0 16 12" shape-rendering="crispEdges"><rect width="16" height="12" fill="#2D5F9A"/><g fill="#fff"><rect x="1" y="3" width="2" height="2"/><rect x="1" y="6" width="2" height="2"/><rect x="1" y="9" width="2" height="2"/><rect x="4" y="3" width="2" height="2"/><rect x="4" y="6" width="2" height="2"/><rect x="4" y="9" width="2" height="2"/><rect x="7" y="3" width="2" height="2"/><rect x="7" y="6" width="2" height="2"/><rect x="7" y="9" width="2" height="2"/><rect x="10" y="3" width="2" height="2"/><rect x="10" y="6" width="2" height="2"/><rect x="10" y="9" width="2" height="2"/><rect x="13" y="3" width="2" height="2"/><rect x="13" y="6" width="2" height="2"/><rect x="13" y="9" width="2" height="2"/></g></svg><div style="left:39px;top:303px;width:1px;height:1px;background:#808080"></div><div style="left:41px;top:303px;width:1px;height:1px;background:#808080"></div><div style="left:43px;top:303px;width:1px;height:1px;background:#808080"></div><div style="left:29px;top:299px;width:9px;height:9px;border:1px solid #A7A7A7;box-sizing:border-box;background:linear-gradient(#F4F4F4,#E0E0E0)"></div><div style="left:31px;top:303px;width:5px;height:1px;background:#000"></div><div style="left:33px;top:301px;width:1px;height:5px;background:#000"></div><div style="left:45px;top:296px;width:14px;height:14px;border:1px solid #8F8F8F;box-sizing:border-box;background:#fff;box-shadow:inset 1px 1px 0 #EDEDED"></div><svg style="left:60px;top:297px" width="16" height="12" viewBox="0 0 16 12" shape-rendering="crispEdges"><rect width="16" height="12" fill="#2D5F9A"/><g fill="#fff"><rect x="1" y="3" width="2" height="2"/><rect x="1" y="6" width="2" height="2"/><rect x="1" y="9" width="2" height="2"/><rect x="4" y="3" width="2" height="2"/><rect x="4" y="6" width="2" height="2"/><rect x="4" y="9" width="2" height="2"/><rect x="7" y="3" width="2" height="2"/><rect x="7" y="6" width="2" height="2"/><rect x="7" y="9" width="2" height="2"/><rect x="10" y="3" width="2" height="2"/><rect x="10" y="6" width="2" height="2"/><rect x="10" y="9" width="2" height="2"/><rect x="13" y="3" width="2" height="2"/><rect x="13" y="6" width="2" height="2"/><rect x="13" y="9" width="2" height="2"/></g></svg><div style="left:39px;top:319px;width:1px;height:1px;background:#808080"></div><div style="left:41px;top:319px;width:1px;height:1px;background:#808080"></div><div style="left:43px;top:319px;width:1px;height:1px;background:#808080"></div><div style="left:29px;top:315px;width:9px;height:9px;border:1px solid #A7A7A7;box-sizing:border-box;background:linear-gradient(#F4F4F4,#E0E0E0)"></div><div style="left:31px;top:319px;width:5px;height:1px;background:#000"></div><div style="left:33px;top:317px;width:1px;height:5px;background:#000"></div><div style="left:45px;top:312px;width:14px;height:14px;border:1px solid #8F8F8F;box-sizing:border-box;background:#fff;box-shadow:inset 1px 1px 0 #EDEDED"></div><svg style="left:60px;top:313px" width="16" height="12" viewBox="0 0 16 12" shape-rendering="crispEdges"><rect width="16" height="12" fill="#2D5F9A"/><g fill="#fff"><rect x="1" y="3" width="2" height="2"/><rect x="1" y="6" width="2" height="2"/><rect x="1" y="9" width="2" height="2"/><rect x="4" y="3" width="2" height="2"/><rect x="4" y="6" width="2" height="2"/><rect x="4" y="9" width="2" height="2"/><rect x="7" y="3" width="2" height="2"/><rect x="7" y="6" width="2" height="2"/><rect x="7" y="9" width="2" height="2"/><rect x="10" y="3" width="2" height="2"/><rect x="10" y="6" width="2" height="2"/><rect x="10" y="9" width="2" height="2"/><rect x="13" y="3" width="2" height="2"/><rect x="13" y="6" width="2" height="2"/><rect x="13" y="9" width="2" height="2"/></g></svg><div style="left:39px;top:335px;width:1px;height:1px;background:#808080"></div><div style="left:41px;top:335px;width:1px;height:1px;background:#808080"></div><div style="left:43px;top:335px;width:1px;height:1px;background:#808080"></div><div style="left:29px;top:331px;width:9px;height:9px;border:1px solid #A7A7A7;box-sizing:border-box;background:linear-gradient(#F4F4F4,#E0E0E0)"></div><div style="left:31px;top:335px;width:5px;height:1px;background:#000"></div><div style="left:33px;top:333px;width:1px;height:5px;background:#000"></div><div style="left:45px;top:328px;width:14px;height:14px;border:1px solid #8F8F8F;box-sizing:border-box;background:#fff;box-shadow:inset 1px 1px 0 #EDEDED"></div><svg style="left:60px;top:329px" width="16" height="12" viewBox="0 0 16 12" shape-rendering="crispEdges"><rect width="16" height="12" fill="#2D5F9A"/><g fill="#fff"><rect x="1" y="3" width="2" height="2"/><rect x="1" y="6" width="2" height="2"/><rect x="1" y="9" width="2" height="2"/><rect x="4" y="3" width="2" height="2"/><rect x="4" y="6" width="2" height="2"/><rect x="4" y="9" width="2" height="2"/><rect x="7" y="3" width="2" height="2"/><rect x="7" y="6" width="2" height="2"/><rect x="7" y="9" width="2" height="2"/><rect x="10" y="3" width="2" height="2"/><rect x="10" y="6" width="2" height="2"/><rect x="10" y="9" width="2" height="2"/><rect x="13" y="3" width="2" height="2"/><rect x="13" y="6" width="2" height="2"/><rect x="13" y="9" width="2" height="2"/></g></svg><div style="left:39px;top:351px;width:1px;height:1px;background:#808080"></div><div style="left:41px;top:351px;width:1px;height:1px;background:#808080"></div><div style="left:43px;top:351px;width:1px;height:1px;background:#808080"></div><div style="left:29px;top:347px;width:9px;height:9px;border:1px solid #A7A7A7;box-sizing:border-box;background:linear-gradient(#F4F4F4,#E0E0E0)"></div><div style="left:31px;top:351px;width:5px;height:1px;background:#000"></div><div style="left:33px;top:349px;width:1px;height:5px;background:#000"></div><div style="left:45px;top:344px;width:14px;height:14px;border:1px solid #8F8F8F;box-sizing:border-box;background:#fff;box-shadow:inset 1px 1px 0 #EDEDED"></div><svg style="left:60px;top:345px" width="16" height="12" viewBox="0 0 16 12" shape-rendering="crispEdges"><rect width="16" height="12" fill="#2D5F9A"/><g fill="#fff"><rect x="1" y="3" width="2" height="2"/><rect x="1" y="6" width="2" height="2"/><rect x="1" y="9" width="2" height="2"/><rect x="4" y="3" width="2" height="2"/><rect x="4" y="6" width="2" height="2"/><rect x="4" y="9" width="2" height="2"/><rect x="7" y="3" width="2" height="2"/><rect x="7" y="6" width="2" height="2"/><rect x="7" y="9" width="2" height="2"/><rect x="10" y="3" width="2" height="2"/><rect x="10" y="6" width="2" height="2"/><rect x="10" y="9" width="2" height="2"/><rect x="13" y="3" width="2" height="2"/><rect x="13" y="6" width="2" height="2"/><rect x="13" y="9" width="2" height="2"/></g></svg><div style="left:39px;top:367px;width:1px;height:1px;background:#808080"></div><div style="left:41px;top:367px;width:1px;height:1px;background:#808080"></div><div style="left:43px;top:367px;width:1px;height:1px;background:#808080"></div><div style="left:29px;top:363px;width:9px;height:9px;border:1px solid #A7A7A7;box-sizing:border-box;background:linear-gradient(#F4F4F4,#E0E0E0)"></div><div style="left:31px;top:367px;width:5px;height:1px;background:#000"></div><div style="left:33px;top:365px;width:1px;height:5px;background:#000"></div><div style="left:45px;top:360px;width:14px;height:14px;border:1px solid #8F8F8F;box-sizing:border-box;background:#fff;box-shadow:inset 1px 1px 0 #EDEDED"></div><svg style="left:60px;top:361px" width="16" height="12" viewBox="0 0 16 12" shape-rendering="crispEdges"><rect width="16" height="12" fill="#2D5F9A"/><g fill="#fff"><rect x="1" y="3" width="2" height="2"/><rect x="1" y="6" width="2" height="2"/><rect x="1" y="9" width="2" height="2"/><rect x="4" y="3" width="2" height="2"/><rect x="4" y="6" width="2" height="2"/><rect x="4" y="9" width="2" height="2"/><rect x="7" y="3" width="2" height="2"/><rect x="7" y="6" width="2" height="2"/><rect x="7" y="9" width="2" height="2"/><rect x="10" y="3" width="2" height="2"/><rect x="10" y="6" width="2" height="2"/><rect x="10" y="9" width="2" height="2"/><rect x="13" y="3" width="2" height="2"/><rect x="13" y="6" width="2" height="2"/><rect x="13" y="9" width="2" height="2"/></g></svg></div><div style="left:288px;top:57px;width:17px;height:340px;border:1px solid #C9C9C9;box-sizing:border-box;background:#fff"></div><div style="left:288px;top:73px;width:17px;height:1px;background:#C9C9C9"></div><div style="left:288px;top:380px;width:17px;height:1px;background:#C9C9C9"></div><svg style="left:291px;top:61px" width="11" height="8" viewBox="0 0 11 8"><path d="M2.2 7.5 L5.5 4 L8.8 7.5" fill="none" stroke="#606060" stroke-width="1.4"/></svg><svg style="left:291px;top:384px" width="11" height="8" viewBox="0 0 11 8"><path d="M2.2 2.5 L5.5 6 L8.8 2.5" fill="none" stroke="#606060" stroke-width="1.4"/></svg><div style="left:288px;top:247px;width:17px;height:121px;border:1px solid #A6A6A6;box-sizing:border-box;background:#DADADA"></div><div style="left:293px;top:303px;width:7px;height:2px;background:#606060"></div><div style="left:293px;top:306px;width:7px;height:2px;background:#606060"></div><div style="left:293px;top:309px;width:7px;height:2px;background:#606060"></div><div style="left:316px;top:33px;width:590px;height:144px;border:1px solid #D0D0D0;box-sizing:border-box"></div><div class="t" style="left:327.00px;top:38px;font-size:12px;line-height:14px;color:#000;letter-spacing:-0.253px;">Selected fields</div><div style="left:830px;top:36px;width:22px;height:22px;border:1px solid #707070;box-sizing:border-box;background:#DDDDDD"></div><svg style="left:837px;top:43px" width="9" height="9" viewBox="0 0 9 9"><path d="M1.5 1.5 L7.5 7.5 M7.5 1.5 L1.5 7.5" stroke="#E84F0A" stroke-width="2.6" stroke-linecap="round"/></svg><div style="left:855px;top:36px;width:22px;height:22px;border:1px solid #707070;box-sizing:border-box;background:#DDDDDD"></div><svg style="left:862px;top:43px" width="9" height="8" viewBox="0 0 9 8"><path d="M4.5 0 L9 4.3 L6.5 4.3 L6.5 8 L2.5 8 L2.5 4.3 L0 4.3 Z" fill="#2F5DB5"/></svg><div style="left:880px;top:36px;width:22px;height:22px;border:1px solid #ADB2B5;box-sizing:border-box;background:#F4F4F4"></div><svg style="left:887px;top:43px" width="9" height="8" viewBox="0 0 9 8"><path d="M4.5 8 L9 3.7 L6.5 3.7 L6.5 0 L2.5 0 L2.5 3.7 L0 3.7 Z" fill="#8C8C8C"/></svg><div style="left:319px;top:122px;width:584px;height:21px;background:#3399FF"></div><div style="left:318px;top:61px;width:586px;height:1px;background:#A0A0A0"></div><div style="left:318px;top:77px;width:586px;height:1px;background:#A0A0A0"></div><div style="left:318px;top:99px;width:586px;height:1px;background:#A0A0A0"></div><div style="left:318px;top:121px;width:586px;height:1px;background:#A0A0A0"></div><div style="left:318px;top:143px;width:586px;height:1px;background:#A0A0A0"></div><div style="left:318px;top:61px;width:1px;height:83px;background:#A0A0A0"></div><div style="left:513px;top:61px;width:1px;height:83px;background:#A0A0A0"></div><div style="left:708px;top:61px;width:1px;height:83px;background:#A0A0A0"></div><div style="left:903px;top:61px;width:1px;height:83px;background:#A0A0A0"></div><div class="t" style="left:324.00px;top:64px;font-size:11px;line-height:13px;color:#000;letter-spacing:0.080px;">Table</div><div class="t" style="left:519.00px;top:64px;font-size:11px;line-height:13px;color:#000;letter-spacing:0.144px;">Field</div><div class="t" style="left:714.00px;top:64px;font-size:11px;line-height:13px;color:#000;letter-spacing:-0.161px;">Alias</div><div class="t" style="left:322.00px;top:83px;font-size:11px;line-height:13px;color:#000;letter-spacing:-0.277px;">Records</div><div class="t" style="left:517.00px;top:83px;font-size:11px;line-height:13px;color:#000;letter-spacing:0.036px;">Title</div><div class="t" style="left:712.00px;top:83px;font-size:11px;line-height:13px;color:#000;letter-spacing:0.026px;">RecordsTitle</div><div class="t" style="left:322.00px;top:105px;font-size:11px;line-height:13px;color:#000;letter-spacing:-0.257px;">RecordClasses</div><div class="t" style="left:517.00px;top:105px;font-size:11px;line-height:13px;color:#000;letter-spacing:0.036px;">Title</div><div class="t" style="left:712.00px;top:105px;font-size:11px;line-height:13px;color:#000;letter-spacing:-0.090px;">RecordClassesTitle</div><div class="t" style="left:322.00px;top:127px;font-size:11px;line-height:13px;color:#fff;letter-spacing:-0.257px;">RecordClasses</div><div class="t" style="left:517.00px;top:127px;font-size:11px;line-height:13px;color:#fff;letter-spacing:0.107px;">Code</div><div class="t" style="left:712.00px;top:127px;font-size:11px;line-height:13px;color:#fff;letter-spacing:-0.098px;">RecordClassesCode</div><div style="left:316px;top:183px;width:590px;height:104px;border:1px solid #D0D0D0;box-sizing:border-box"></div><div class="t" style="left:327.00px;top:188px;font-size:12px;line-height:14px;color:#000;letter-spacing:-0.076px;">Relationships (Manual Mode)</div><div style="left:694px;top:186px;width:85px;height:22px;border:1px solid #707070;box-sizing:border-box;background:#DDDDDD"></div><div class="t" style="left:705.00px;top:191px;font-size:11px;line-height:13px;color:#000;letter-spacing:0.358px;">Auto Detect</div><div style="left:782px;top:186px;width:45px;height:22px;border:1px solid #707070;box-sizing:border-box;background:#DDDDDD"></div><div style="left:788px;top:196px;width:10px;height:2px;background:#2F5BAA"></div><div style="left:792px;top:192px;width:2px;height:10px;background:#2F5BAA"></div><div class="t" style="left:799.00px;top:191px;font-size:11px;line-height:13px;color:#000;letter-spacing:0.773px;">Add</div><div style="left:830px;top:186px;width:22px;height:22px;border:1px solid #707070;box-sizing:border-box;background:#DDDDDD"></div><svg style="left:837px;top:193px" width="9" height="9" viewBox="0 0 9 9"><path d="M1.5 1.5 L7.5 7.5 M7.5 1.5 L1.5 7.5" stroke="#E84F0A" stroke-width="2.6" stroke-linecap="round"/></svg><div style="left:855px;top:186px;width:22px;height:22px;border:1px solid #ADB2B5;box-sizing:border-box;background:#F4F4F4"></div><svg style="left:862px;top:193px" width="9" height="8" viewBox="0 0 9 8"><path d="M4.5 0 L9 4.3 L6.5 4.3 L6.5 8 L2.5 8 L2.5 4.3 L0 4.3 Z" fill="#8C8C8C"/></svg><div style="left:880px;top:186px;width:22px;height:22px;border:1px solid #ADB2B5;box-sizing:border-box;background:#F4F4F4"></div><svg style="left:887px;top:193px" width="9" height="8" viewBox="0 0 9 8"><path d="M4.5 8 L9 3.7 L6.5 3.7 L6.5 0 L2.5 0 L2.5 3.7 L0 3.7 Z" fill="#8C8C8C"/></svg><div style="left:319px;top:228px;width:584px;height:21px;background:#3399FF"></div><div style="left:318px;top:211px;width:586px;height:1px;background:#A0A0A0"></div><div style="left:318px;top:227px;width:586px;height:1px;background:#A0A0A0"></div><div style="left:318px;top:249px;width:586px;height:1px;background:#A0A0A0"></div><div style="left:318px;top:211px;width:1px;height:39px;background:#A0A0A0"></div><div style="left:391px;top:211px;width:1px;height:39px;background:#A0A0A0"></div><div style="left:450px;top:211px;width:1px;height:39px;background:#A0A0A0"></div><div style="left:555px;top:211px;width:1px;height:39px;background:#A0A0A0"></div><div style="left:903px;top:211px;width:1px;height:39px;background:#A0A0A0"></div><div class="t" style="left:324.00px;top:214px;font-size:11px;line-height:13px;color:#000;letter-spacing:0.091px;">Left Table</div><div class="t" style="left:397.00px;top:214px;font-size:11px;line-height:13px;color:#000;letter-spacing:-0.083px;">Join Type</div><div class="t" style="left:456.00px;top:214px;font-size:11px;line-height:13px;color:#000;letter-spacing:0.249px;">RightTable</div><div class="t" style="left:561.00px;top:214px;font-size:11px;line-height:13px;color:#000;letter-spacing:0.165px;">Related fields</div><div class="t" style="left:322.00px;top:233px;font-size:11px;line-height:13px;color:#fff;letter-spacing:-0.277px;">Records</div><div class="t" style="left:394.00px;top:233px;font-size:11px;line-height:13px;color:#fff;letter-spacing:0.498px;">Inner</div><div class="t" style="left:454.00px;top:233px;font-size:11px;line-height:13px;color:#fff;letter-spacing:-0.257px;">RecordClasses</div><div class="t" style="left:559.00px;top:233px;font-size:11px;line-height:13px;color:#fff;letter-spacing:0.098px;">RecordClassId = Id</div><div style="left:316px;top:293px;width:590px;height:108px;border:1px solid #D0D0D0;box-sizing:border-box"></div><div class="t" style="left:327.00px;top:298px;font-size:12px;line-height:14px;color:#000;letter-spacing:-0.444px;">Filters</div><div style="left:782px;top:296px;width:45px;height:22px;border:1px solid #707070;box-sizing:border-box;background:#DDDDDD"></div><div style="left:788px;top:306px;width:10px;height:2px;background:#2F5BAA"></div><div style="left:792px;top:302px;width:2px;height:10px;background:#2F5BAA"></div><div class="t" style="left:799.00px;top:301px;font-size:11px;line-height:13px;color:#000;letter-spacing:0.773px;">Add</div><div style="left:830px;top:296px;width:22px;height:22px;border:1px solid #ADB2B5;box-sizing:border-box;background:#F4F4F4"></div><svg style="left:837px;top:303px" width="9" height="9" viewBox="0 0 9 9"><path d="M1.5 1.5 L7.5 7.5 M7.5 1.5 L1.5 7.5" stroke="#A8A8A8" stroke-width="2.2" stroke-linecap="round"/></svg><div style="left:855px;top:296px;width:22px;height:22px;border:1px solid #ADB2B5;box-sizing:border-box;background:#F4F4F4"></div><svg style="left:862px;top:303px" width="9" height="8" viewBox="0 0 9 8"><path d="M4.5 0 L9 4.3 L6.5 4.3 L6.5 8 L2.5 8 L2.5 4.3 L0 4.3 Z" fill="#8C8C8C"/></svg><div style="left:880px;top:296px;width:22px;height:22px;border:1px solid #ADB2B5;box-sizing:border-box;background:#F4F4F4"></div><svg style="left:887px;top:303px" width="9" height="8" viewBox="0 0 9 8"><path d="M4.5 8 L9 3.7 L6.5 3.7 L6.5 0 L2.5 0 L2.5 3.7 L0 3.7 Z" fill="#8C8C8C"/></svg><div style="left:318px;top:321px;width:586px;height:1px;background:#A0A0A0"></div><div style="left:318px;top:350px;width:586px;height:1px;background:#A0A0A0"></div><div style="left:318px;top:321px;width:1px;height:30px;background:#A0A0A0"></div><div style="left:379px;top:321px;width:1px;height:30px;background:#A0A0A0"></div><div style="left:438px;top:321px;width:1px;height:30px;background:#A0A0A0"></div><div style="left:670px;top:321px;width:1px;height:30px;background:#A0A0A0"></div><div style="left:903px;top:321px;width:1px;height:30px;background:#A0A0A0"></div><div class="t" style="left:324.00px;top:324px;font-size:11px;line-height:13px;color:#000;letter-spacing:0.144px;">Field</div><div class="t" style="left:324.00px;top:337px;font-size:11px;line-height:13px;color:#000;letter-spacing:-0.066px;">name</div><div class="t" style="left:385.00px;top:331px;font-size:11px;line-height:13px;color:#000;letter-spacing:0.422px;">Operator</div><div class="t" style="left:444.00px;top:331px;font-size:11px;line-height:13px;color:#000;letter-spacing:-0.062px;">Parameter name</div><div class="t" style="left:676.00px;top:331px;font-size:11px;line-height:13px;color:#000;letter-spacing:-0.038px;">Preview value</div><div style="left:10px;top:417px;width:899px;height:71px;border:1px solid #D5DFE5;border-radius:3px;box-sizing:border-box"></div><div style="left:17px;top:413px;width:73px;height:8px;background:#fff"></div><div class="t" style="left:19.00px;top:410px;font-size:12px;line-height:14px;color:#000;letter-spacing:-0.260px;">Data preview</div><div style="left:14px;top:447px;width:891px;height:21px;background:#3399FF"></div><div style="left:13px;top:428px;width:893px;height:1px;background:#A0A0A0"></div><div style="left:13px;top:446px;width:893px;height:1px;background:#A0A0A0"></div><div style="left:13px;top:468px;width:893px;height:1px;background:#A0A0A0"></div><div style="left:13px;top:428px;width:1px;height:58px;background:#A0A0A0"></div><div style="left:310px;top:428px;width:1px;height:58px;background:#A0A0A0"></div><div style="left:607px;top:428px;width:1px;height:58px;background:#A0A0A0"></div><div style="left:905px;top:428px;width:1px;height:58px;background:#A0A0A0"></div><div style="left:11px;top:486px;width:897px;height:1px;background:#fff"></div><div class="t" style="left:19.50px;top:431px;font-size:12px;line-height:14px;color:#000;letter-spacing:-0.258px;">RecordsTitle</div><div class="t" style="left:316.50px;top:431px;font-size:12px;line-height:14px;color:#000;letter-spacing:-0.377px;">RecordClassesTitle</div><div class="t" style="left:613.50px;top:431px;font-size:12px;line-height:14px;color:#000;letter-spacing:-0.480px;">RecordClassesCode</div><div class="t" style="left:17.50px;top:451px;font-size:12px;line-height:14px;color:#fff;letter-spacing:-0.175px;">bonifaz resume</div><div class="t" style="left:314.50px;top:451px;font-size:12px;line-height:14px;color:#fff;letter-spacing:-0.275px;">Personnel Files - General</div><div class="t" style="left:611.50px;top:451px;font-size:12px;line-height:14px;color:#fff;letter-spacing:-0.060px;">HUM-70</div><div class="t" style="left:17.50px;top:473px;font-size:12px;line-height:14px;color:#000;letter-spacing:-0.196px;">bonifaz state w4</div><div class="t" style="left:314.50px;top:473px;font-size:12px;line-height:14px;color:#000;letter-spacing:-0.275px;">Personnel Files - General</div><div class="t" style="left:611.50px;top:473px;font-size:12px;line-height:14px;color:#000;letter-spacing:-0.060px;">HUM-70</div><div style="left:745px;top:495px;width:73px;height:21px;border:1px solid #3C7FB1;box-sizing:border-box;background:#DDDDDD;box-shadow:inset 0 0 0 1px #EFE9E2"></div><div class="t" style="left:772.50px;top:500px;font-size:11px;line-height:13px;color:#000;">OK</div><div style="left:831px;top:495px;width:73px;height:21px;border:1px solid #707070;box-sizing:border-box;background:#DDDDDD;box-shadow:inset 0 0 0 1px #E8E8E8"></div><div class="t" style="left:850.00px;top:500px;font-size:11px;line-height:13px;color:#000;letter-spacing:-0.059px;">Cancel</div>
</body></html>
